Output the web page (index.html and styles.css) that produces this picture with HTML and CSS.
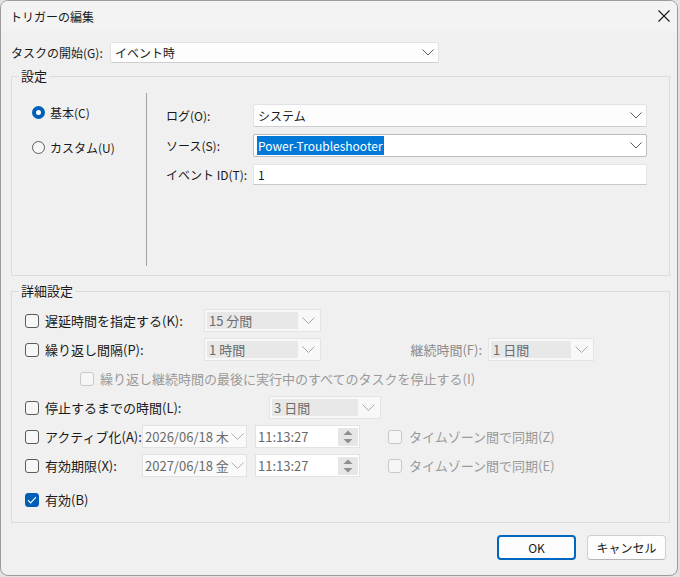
FILE: index.html
```html
<!DOCTYPE html>
<html lang="ja">
<head>
    <meta charset="UTF-8">
    <meta name="viewport" content="width=device-width, initial-scale=1.0">
    <title>トリガーの編集</title>
    <link rel="stylesheet" href="styles.css">
</head>
<body>

    <div class="dialog">
        <div class="titlebar">
            <span class="title">トリガーの編集</span>
            <svg class="close" width="12" height="12" viewBox="0 0 12 12"><path d="M0.5 0.5L11.5 11.5M11.5 0.5L0.5 11.5" stroke="#1a1a1a" stroke-width="1.1"/></svg>
        </div>

        <div class="content">
            <div class="start-row">
                <span class="start-label">タスクの開始(G):</span>
                <div class="combo start-combo">
                    <span class="value">イベント時</span>
                    <svg class="chev" width="12" height="7" viewBox="0 0 12 7"><path d="M0.5 0.5L6 6L11.5 0.5" fill="none" stroke="#5c5c5c"/></svg>
                </div>
            </div>

            <!-- 設定 -->
            <fieldset class="group">
                <legend>設定</legend>
                <div class="settings-body">
                    <div class="modes">
                        <div class="radio-row"><span class="radio checked"></span>基本(C)</div>
                        <div class="radio-row"><span class="radio"></span>カスタム(U)</div>
                    </div>
                    <div class="divider"></div>
                    <div class="fields">
                        <span class="field-label">ログ(O):</span>
                        <div class="combo">
                            <span class="value">システム</span>
                            <svg class="chev" width="12" height="7" viewBox="0 0 12 7"><path d="M0.5 0.5L6 6L11.5 0.5" fill="none" stroke="#5c5c5c"/></svg>
                        </div>
                        <span class="field-label">ソース(S):</span>
                        <div class="combo focused">
                            <span class="value"><span class="selected">Power-Troubleshooter</span></span>
                            <svg class="chev" width="12" height="7" viewBox="0 0 12 7"><path d="M0.5 0.5L6 6L11.5 0.5" fill="none" stroke="#5c5c5c"/></svg>
                        </div>
                        <span class="field-label">イベント ID(T):</span>
                        <div class="textbox">1</div>
                    </div>
                </div>
            </fieldset>

            <!-- 詳細設定 -->
            <fieldset class="group advanced">
                <legend>詳細設定</legend>
                <div class="rows">
                    <div class="row">
                        <label class="check w-short"><span class="box"></span>遅延時間を指定する(K):</label>
                        <div class="dcombo w-117">
                            <span class="dvalue">15 分間</span>
                            <svg class="chev" width="13" height="7" viewBox="0 0 13 7"><path d="M0.5 0.5L6.5 6.5L12.5 0.5" fill="none" stroke="#a8a8a8"/></svg>
                        </div>
                    </div>
                    <div class="row">
                        <label class="check w-short"><span class="box"></span>繰り返し間隔(P):</label>
                        <div class="dcombo w-117">
                            <span class="dvalue">1 時間</span>
                            <svg class="chev" width="13" height="7" viewBox="0 0 13 7"><path d="M0.5 0.5L6.5 6.5L12.5 0.5" fill="none" stroke="#a8a8a8"/></svg>
                        </div>
                        <span class="sub-label">継続時間(F):</span>
                        <div class="dcombo w-106">
                            <span class="dvalue">1 日間</span>
                            <svg class="chev" width="13" height="7" viewBox="0 0 13 7"><path d="M0.5 0.5L6.5 6.5L12.5 0.5" fill="none" stroke="#a8a8a8"/></svg>
                        </div>
                    </div>
                    <div class="row">
                        <label class="check disabled indent"><span class="box"></span>繰り返し継続時間の最後に実行中のすべてのタスクを停止する(I)</label>
                    </div>
                    <div class="row">
                        <label class="check w-long"><span class="box"></span>停止するまでの時間(L):</label>
                        <div class="dcombo w-112">
                            <span class="dvalue">3 日間</span>
                            <svg class="chev" width="13" height="7" viewBox="0 0 13 7"><path d="M0.5 0.5L6.5 6.5L12.5 0.5" fill="none" stroke="#a8a8a8"/></svg>
                        </div>
                    </div>
                    <div class="row">
                        <label class="check w-date"><span class="box"></span>アクティブ化(A):</label>
                        <div class="datebox">
                            <span>2026/06/18 木</span>
                            <svg class="chev" width="13" height="7" viewBox="0 0 13 7"><path d="M0.5 0.5L6.5 6.5L12.5 0.5" fill="none" stroke="#b0b0b0"/></svg>
                        </div>
                        <div class="timebox">
                            <span>11:13:27</span>
                            <span class="spin">
                                <svg width="10" height="14" viewBox="0 0 10 14"><path d="M5 0.5L9.5 5H0.5Z M0.5 9H9.5L5 13.5Z" fill="#8f8f8f"/></svg>
                            </span>
                        </div>
                        <label class="check disabled sync"><span class="box"></span>タイムゾーン間で同期(Z)</label>
                    </div>
                    <div class="row">
                        <label class="check w-date"><span class="box"></span>有効期限(X):</label>
                        <div class="datebox">
                            <span>2027/06/18 金</span>
                            <svg class="chev" width="13" height="7" viewBox="0 0 13 7"><path d="M0.5 0.5L6.5 6.5L12.5 0.5" fill="none" stroke="#b0b0b0"/></svg>
                        </div>
                        <div class="timebox">
                            <span>11:13:27</span>
                            <span class="spin">
                                <svg width="10" height="14" viewBox="0 0 10 14"><path d="M5 0.5L9.5 5H0.5Z M0.5 9H9.5L5 13.5Z" fill="#8f8f8f"/></svg>
                            </span>
                        </div>
                        <label class="check disabled sync"><span class="box"></span>タイムゾーン間で同期(E)</label>
                    </div>
                    <div class="row enable-row">
                        <label class="check"><span class="box checked"><svg width="10" height="8" viewBox="0 0 10 8"><path d="M1 4.2L3.6 6.8L9 1.2" fill="none" stroke="#fff" stroke-width="1.2"/></svg></span>有効(B)</label>
                    </div>
                </div>
            </fieldset>

            <div class="buttons">
                <button class="btn default">OK</button>
                <button class="btn">キャンセル</button>
            </div>
        </div>
    </div>

</body>
</html>
```

FILE: styles.css
```css
* {
    box-sizing: border-box;
}

body {
    margin: 0;
    background-color: #e2e2e2;
    font-family: "Noto Sans CJK JP", "Noto Sans", sans-serif;
    font-size: 12px;
    color: #1a1a1a;
}

.dialog {
    width: 678px;
    height: 576px;
    background-color: #f0f0f0;
    border: 1px solid #9c9c9c;
    border-radius: 8px;
    overflow: hidden;
    display: flex;
    flex-direction: column;
}

.titlebar {
    height: 30px;
    background-color: #f3f3f3;
    display: flex;
    align-items: center;
    justify-content: space-between;
    padding: 0 7px 0 9px;
}

.content {
    padding: 0 7px 0 10px;
}

.start-row {
    display: flex;
    align-items: center;
    height: 21px;
    margin-top: 11px;
}

.start-label {
    width: 99px;
}

/* combo boxes */
.combo {
    display: flex;
    align-items: center;
    justify-content: space-between;
    height: 100%;
    background-color: #fdfdfd;
    border: 1px solid #e3e3e3;
    border-bottom-color: #cfcfcf;
    border-radius: 2px;
    padding: 0 4px 0 4px;
}

.start-combo {
    width: 329px;
}

.combo.focused {
    border: 1px solid #bdbdbd;
    background-color: #fff;
    padding-left: 3px;
}

.selected {
    background-color: #0078d7;
    color: #fff;
    padding: 1px 1px;
}

.textbox {
    background-color: #fff;
    border: 1px solid #e6e6e6;
    border-bottom-color: #c8c8c8;
    padding-left: 4px;
    display: flex;
    align-items: center;
}

/* group boxes */
.group {
    margin: 5px 0 0;
    padding: 0;
    border: 1px solid #dcdcdc;
    min-width: 0;
}

.group legend {
    font-size: 13px;
    line-height: 16px;
    padding: 0 2px;
    margin-left: 7px;
}

.group.advanced {
    margin-top: 7px;
}

.settings-body {
    display: flex;
    height: 173px;
    margin: 9px 0;
}

.modes {
    width: 134px;
    padding: 11px 0 0 20px;
    display: flex;
    flex-direction: column;
    gap: 18px;
}

.radio-row {
    display: flex;
    align-items: center;
    gap: 5px;
    line-height: 17px;
}

.radio {
    width: 13px;
    height: 13px;
    border-radius: 50%;
    border: 1px solid #5d5d5d;
    background-color: #f7f7f7;
}

.radio.checked {
    border: 4px solid #005fb8;
    background-color: #fff;
}

.divider {
    width: 1px;
    background-color: #a3a3a3;
}

.fields {
    flex: 1;
    display: grid;
    grid-template-columns: 87px 1fr;
    grid-template-rows: 23px 23px 21px;
    row-gap: 7px;
    align-content: start;
    padding: 11px 22px 0 19px;
}

.field-label {
    display: flex;
    align-items: center;
}

/* 詳細設定 */
.rows {
    display: flex;
    flex-direction: column;
    gap: 6px;
    padding: 10px 0 11px 13px;
    font-size: 13px;
}

.row {
    display: flex;
    align-items: center;
    height: 23px;
}

.enable-row {
    margin-top: 5px;
}

.check {
    display: flex;
    align-items: center;
    gap: 6px;
}

.box {
    width: 14px;
    height: 14px;
    border: 1px solid #5a5a5a;
    border-radius: 3px;
    background-color: #f7f7f7;
    display: flex;
    align-items: center;
    justify-content: center;
    flex-shrink: 0;
}

.box.checked {
    border-color: #005fb8;
    background-color: #005fb8;
}

.check.disabled {
    color: #9a9a9a;
}

.check.disabled .box {
    border-color: #c8c8c8;
    background-color: #f6f6f6;
}

.w-short {
    width: 179px;
}

.w-long {
    width: 244px;
}

.w-date {
    width: 117px;
}

.indent {
    margin-left: 55px;
}

.sync {
    margin-left: 28px;
    gap: 7px;
}

.dcombo {
    display: flex;
    align-items: center;
    height: 100%;
    background-color: #f8f8f8;
    border: 1px solid #e4e4e4;
    padding: 2px 5px 2px 2px;
    gap: 4px;
}

.dvalue {
    flex: 1;
    height: 100%;
    background-color: #e8e8e8;
    color: #6d6d6d;
    padding-left: 2px;
    display: flex;
    align-items: center;
}

.w-117 {
    width: 117px;
}

.w-106 {
    width: 106px;
}

.w-112 {
    width: 112px;
}

.sub-label {
    width: 167px;
    text-align: right;
    padding-right: 6px;
    color: #8c8c8c;
}

.datebox,
.timebox {
    width: 105px;
    height: 23px;
    display: flex;
    align-items: center;
    justify-content: space-between;
    border: 1px solid #e2e2e2;
    color: #6a6a6a;
}

.datebox {
    background-color: #fafafa;
    padding: 0 2px 0 2px;
    margin-right: 8px;
}

.timebox {
    background-color: #fff;
    padding: 0 1px 0 2px;
}

.spin {
    width: 20px;
    height: 18px;
    background-color: #e6e6e6;
    display: flex;
    align-items: center;
    justify-content: center;
}

/* buttons */
.buttons {
    display: flex;
    justify-content: flex-end;
    gap: 11px;
    margin: 12px 4px 0 0;
}

.btn {
    width: 79px;
    height: 25px;
    font-family: inherit;
    font-size: 12px;
    color: #1a1a1a;
    background-color: #fdfdfd;
    border: 1px solid #d0d0d0;
    border-bottom-color: #b5b5b5;
    border-radius: 4px;
}

.btn.default {
    border: 2px solid #0067c0;
}
```
